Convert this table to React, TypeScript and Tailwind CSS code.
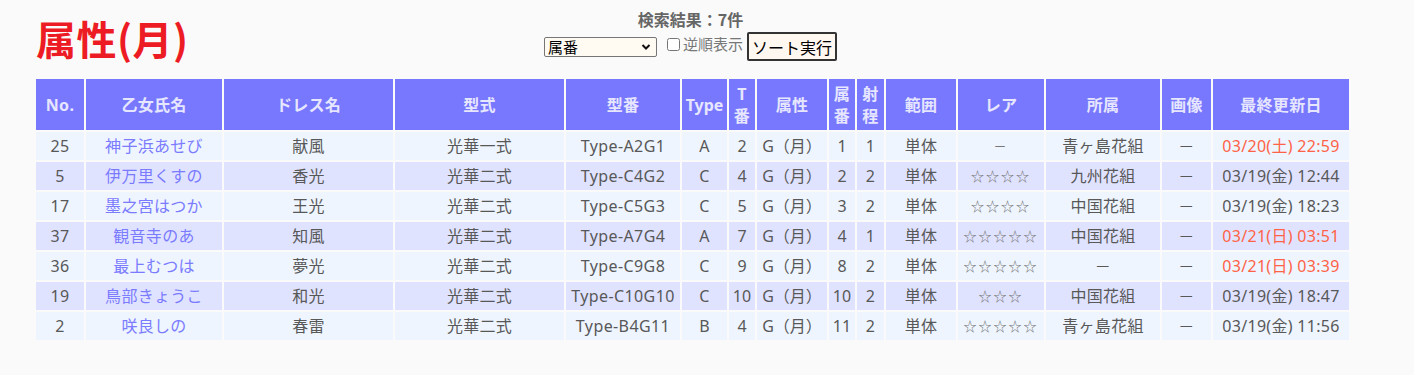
import React from "react";

type Row = {
  no: string;
  name: string;
  dress: string;
  kata: string;
  kataban: string;
  type: string;
  tban: string;
  attr: string;
  zban: string;
  range: string;
  area: string;
  rare: string;
  team: string;
  img: string;
  date: string;
  red: boolean;
};

const rows: Row[] = [
  { no: "25", name: "神子浜あせび", dress: "献風", kata: "光華一式", kataban: "Type-A2G1", type: "A", tban: "2", attr: "G（月）", zban: "1", range: "1", area: "単体", rare: "－", team: "青ヶ島花組", img: "－", date: "03/20(土) 22:59", red: true },
  { no: "5", name: "伊万里くすの", dress: "香光", kata: "光華二式", kataban: "Type-C4G2", type: "C", tban: "4", attr: "G（月）", zban: "2", range: "2", area: "単体", rare: "☆☆☆☆", team: "九州花組", img: "－", date: "03/19(金) 12:44", red: false },
  { no: "17", name: "墨之宮はつか", dress: "王光", kata: "光華二式", kataban: "Type-C5G3", type: "C", tban: "5", attr: "G（月）", zban: "3", range: "2", area: "単体", rare: "☆☆☆☆", team: "中国花組", img: "－", date: "03/19(金) 18:23", red: false },
  { no: "37", name: "観音寺のあ", dress: "知風", kata: "光華二式", kataban: "Type-A7G4", type: "A", tban: "7", attr: "G（月）", zban: "4", range: "1", area: "単体", rare: "☆☆☆☆☆", team: "中国花組", img: "－", date: "03/21(日) 03:51", red: true },
  { no: "36", name: "最上むつは", dress: "夢光", kata: "光華二式", kataban: "Type-C9G8", type: "C", tban: "9", attr: "G（月）", zban: "8", range: "2", area: "単体", rare: "☆☆☆☆☆", team: "－", img: "－", date: "03/21(日) 03:39", red: true },
  { no: "19", name: "鳥部きょうこ", dress: "和光", kata: "光華二式", kataban: "Type-C10G10", type: "C", tban: "10", attr: "G（月）", zban: "10", range: "2", area: "単体", rare: "☆☆☆", team: "中国花組", img: "－", date: "03/19(金) 18:47", red: false },
  { no: "2", name: "咲良しの", dress: "春雷", kata: "光華二式", kataban: "Type-B4G11", type: "B", tban: "4", attr: "G（月）", zban: "11", range: "2", area: "単体", rare: "☆☆☆☆☆", team: "青ヶ島花組", img: "－", date: "03/19(金) 11:56", red: false },
];

const th = "bg-[#7878ff] text-[#e6e6ff] font-bold text-[16px] leading-[22px] h-[51px] p-0 text-center align-middle";
const td = "h-[28px] p-0 text-center align-middle whitespace-nowrap";

export default function App() {
  return (
    <div
      className="min-h-screen bg-[#fafafa] text-[#585858]"
      style={{ fontFamily: '"Noto Sans", "Noto Sans CJK JP", sans-serif' }}
    >
      <div className="w-[1381px] pt-[9px]">
        <div className="grid grid-cols-[1fr_auto_1fr]">
          <div className="pl-[36px] pt-[9px]">
            <h1 className="text-[40px] leading-[40px] font-bold text-[#ed1c24] tracking-[0.5px]" style={{ fontFamily: '"Noto Sans CJK JP", sans-serif' }}>
              属性(月)
            </h1>
          </div>
          <div className="flex flex-col items-center">
            <div className="text-[16px] leading-[20px] font-bold text-[#666]" style={{ fontFamily: '"Noto Sans CJK JP", sans-serif' }}>
              検索結果：7件
            </div>
            <div className="mt-[3px] flex items-center h-[29px]" style={{ fontFamily: '"Noto Sans CJK JP", sans-serif' }}>
              <div className="relative w-[113px] h-[20px]">
                <select
                  className="appearance-none block w-full h-full border border-[#767676] rounded-[2px] bg-[#fffaf2] text-[15px] leading-[18px] text-black pl-[3px] py-0 outline-none"
                  defaultValue="属番"
                >
                  <option>属番</option>
                </select>
                <svg className="pointer-events-none absolute right-[6px] top-[6px]" width="10" height="8" viewBox="0 0 10 8">
                  <path d="M1.5 2 L5 5.5 L8.5 2" fill="none" stroke="#111" strokeWidth="2" />
                </svg>
              </div>
              <label className="flex items-center ml-[10px] mb-[4px] text-[15px] text-[#777]">
                <input type="checkbox" className="w-[13px] h-[13px] mr-[3px]" />
                逆順表示
              </label>
              <button className="ml-[4px] w-[90px] h-[29px] border-2 border-[#333] rounded-[2px] bg-[#fff8f0] text-[16px] text-black leading-none">
                ソート実行
              </button>
            </div>
          </div>
          <div />
        </div>

        <table className="ml-[34px] mt-[16px] w-[1315px] table-fixed border-separate border-spacing-[2px] tracking-[0.3px]">
          <colgroup>
            <col className="w-[48px]" />
            <col className="w-[136px]" />
            <col className="w-[169px]" />
            <col className="w-[169px]" />
            <col className="w-[114px]" />
            <col className="w-[45px]" />
            <col className="w-[26px]" />
            <col className="w-[70px]" />
            <col className="w-[26px]" />
            <col className="w-[27px]" />
            <col className="w-[70px]" />
            <col className="w-[86px]" />
            <col className="w-[114px]" />
            <col className="w-[49px]" />
            <col className="w-[136px]" />
          </colgroup>
          <thead>
            <tr>
              <th className={th}>No.</th>
              <th className={th}>乙女氏名</th>
              <th className={th}>ドレス名</th>
              <th className={th}>型式</th>
              <th className={th}>型番</th>
              <th className={`${th} tracking-normal`}>Type</th>
              <th className={th}>T<br />番</th>
              <th className={th}>属性</th>
              <th className={th}>属<br />番</th>
              <th className={th}>射<br />程</th>
              <th className={th}>範囲</th>
              <th className={th}>レア</th>
              <th className={th}>所属</th>
              <th className={th}>画像</th>
              <th className={th}>最終更新日</th>
            </tr>
          </thead>
          <tbody className="text-[16px] leading-[22px]">
            {rows.map((r, i) => {
              const bg = i % 2 === 0 ? "bg-[#eef5ff]" : "bg-[#e0e3ff]";
              const c = `${td} ${bg}`;
              return (
                <tr key={i}>
                  <td className={c}>{r.no}</td>
                  <td className={`${c} text-[#7b7bff]`}>{r.name}</td>
                  <td className={c}>{r.dress}</td>
                  <td className={c}>{r.kata}</td>
                  <td className={`${c} tracking-[0.4px]`}>{r.kataban}</td>
                  <td className={c}>{r.type}</td>
                  <td className={`${c} tracking-normal`}>{r.tban}</td>
                  <td className={`${c} tracking-normal`}>{r.attr}</td>
                  <td className={`${c} tracking-normal`}>{r.zban}</td>
                  <td className={c}>{r.range}</td>
                  <td className={c}>{r.area}</td>
                  <td className={`${c} text-[13px] tracking-[2px] text-[#777]`}>{r.rare}</td>
                  <td className={c}>{r.team}</td>
                  <td className={c}>{r.img}</td>
                  <td className={`${c} ${r.red ? "text-[#ff6347]" : ""}`}>{r.date}</td>
                </tr>
              );
            })}
          </tbody>
        </table>
      </div>
    </div>
  );
}
